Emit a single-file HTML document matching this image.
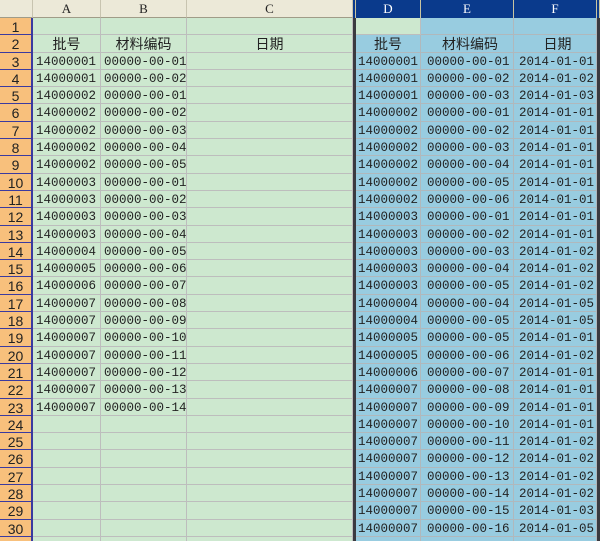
<!DOCTYPE html>
<html><head><meta charset="utf-8"><style>
html,body{margin:0;padding:0;background:#fff;width:600px;height:545px;overflow:hidden}
#s{position:absolute;left:0;top:0;width:600px;height:541px;overflow:hidden;display:grid;
grid-template-columns:33px 68px 86px 166px 3px 65px 93px 83px 3px;
grid-template-rows:18px repeat(31,17.3px);
font-family:"Liberation Mono","Noto Sans CJK SC",monospace;font-size:12.5px;color:#222}
#s div{box-sizing:border-box;white-space:nowrap;overflow:hidden;line-height:19px}
.h{background:#ece9d8;border-right:1px solid #c8c4b0;border-bottom:1px solid #a09c88;text-align:center;font-family:"Liberation Serif",serif;font-size:13px;line-height:17px!important;color:#222}
.hb{background:#0a3a8c;color:#fff;border-right:1px solid #c8c4a0;text-align:center;font-family:"Liberation Serif",serif;font-size:13px;line-height:17px!important}
.r{background:#f8c07c;border-right:2px solid #3a3aa0;border-bottom:1px solid #3a3aa0;text-align:center;font-size:14px;font-family:"Liberation Sans",sans-serif;line-height:18px!important}
.g{background:#cde8cf;border-right:1px solid #bdbdbd;border-bottom:1px solid #bdbdbd;padding-left:3px}
.b{background:#98cce0;border-right:1px solid #b0b8bc;border-bottom:1px solid #b0b8bc;padding-left:2px}
#s .b:nth-child(9n+7){padding-left:6px}
#s .b:nth-child(9n+8){padding-left:5px}
.d{background:#3a3a40}
#s .c{text-align:center;padding-left:0;font-size:14px;font-family:"Liberation Sans","Noto Sans CJK SC",sans-serif}
</style></head><body><div id="s">
<div class="h"></div><div class="h">A</div><div class="h">B</div><div class="h">C</div><div class="hb" style="background:#0a3a8c"></div><div class="hb">D</div><div class="hb">E</div><div class="hb">F</div><div class="hb"></div>
<div class="r">1</div><div class="g"></div><div class="g"></div><div class="g"></div><div class="d"></div><div class="g"></div><div class="b"></div><div class="b"></div><div class="d"></div>
<div class="r">2</div><div class="g c">批号</div><div class="g c">材料编码</div><div class="g c">日期</div><div class="d"></div><div class="b c">批号</div><div class="b c">材料编码</div><div class="b c">日期</div><div class="d"></div>
<div class="r">3</div><div class="g">14000001</div><div class="g">00000-00-01</div><div class="g"></div><div class="d"></div><div class="b">14000001</div><div class="b">00000-00-01</div><div class="b">2014-01-01</div><div class="d"></div>
<div class="r">4</div><div class="g">14000001</div><div class="g">00000-00-02</div><div class="g"></div><div class="d"></div><div class="b">14000001</div><div class="b">00000-00-02</div><div class="b">2014-01-02</div><div class="d"></div>
<div class="r">5</div><div class="g">14000002</div><div class="g">00000-00-01</div><div class="g"></div><div class="d"></div><div class="b">14000001</div><div class="b">00000-00-03</div><div class="b">2014-01-03</div><div class="d"></div>
<div class="r">6</div><div class="g">14000002</div><div class="g">00000-00-02</div><div class="g"></div><div class="d"></div><div class="b">14000002</div><div class="b">00000-00-01</div><div class="b">2014-01-01</div><div class="d"></div>
<div class="r">7</div><div class="g">14000002</div><div class="g">00000-00-03</div><div class="g"></div><div class="d"></div><div class="b">14000002</div><div class="b">00000-00-02</div><div class="b">2014-01-01</div><div class="d"></div>
<div class="r">8</div><div class="g">14000002</div><div class="g">00000-00-04</div><div class="g"></div><div class="d"></div><div class="b">14000002</div><div class="b">00000-00-03</div><div class="b">2014-01-01</div><div class="d"></div>
<div class="r">9</div><div class="g">14000002</div><div class="g">00000-00-05</div><div class="g"></div><div class="d"></div><div class="b">14000002</div><div class="b">00000-00-04</div><div class="b">2014-01-01</div><div class="d"></div>
<div class="r">10</div><div class="g">14000003</div><div class="g">00000-00-01</div><div class="g"></div><div class="d"></div><div class="b">14000002</div><div class="b">00000-00-05</div><div class="b">2014-01-01</div><div class="d"></div>
<div class="r">11</div><div class="g">14000003</div><div class="g">00000-00-02</div><div class="g"></div><div class="d"></div><div class="b">14000002</div><div class="b">00000-00-06</div><div class="b">2014-01-01</div><div class="d"></div>
<div class="r">12</div><div class="g">14000003</div><div class="g">00000-00-03</div><div class="g"></div><div class="d"></div><div class="b">14000003</div><div class="b">00000-00-01</div><div class="b">2014-01-01</div><div class="d"></div>
<div class="r">13</div><div class="g">14000003</div><div class="g">00000-00-04</div><div class="g"></div><div class="d"></div><div class="b">14000003</div><div class="b">00000-00-02</div><div class="b">2014-01-01</div><div class="d"></div>
<div class="r">14</div><div class="g">14000004</div><div class="g">00000-00-05</div><div class="g"></div><div class="d"></div><div class="b">14000003</div><div class="b">00000-00-03</div><div class="b">2014-01-02</div><div class="d"></div>
<div class="r">15</div><div class="g">14000005</div><div class="g">00000-00-06</div><div class="g"></div><div class="d"></div><div class="b">14000003</div><div class="b">00000-00-04</div><div class="b">2014-01-02</div><div class="d"></div>
<div class="r">16</div><div class="g">14000006</div><div class="g">00000-00-07</div><div class="g"></div><div class="d"></div><div class="b">14000003</div><div class="b">00000-00-05</div><div class="b">2014-01-02</div><div class="d"></div>
<div class="r">17</div><div class="g">14000007</div><div class="g">00000-00-08</div><div class="g"></div><div class="d"></div><div class="b">14000004</div><div class="b">00000-00-04</div><div class="b">2014-01-05</div><div class="d"></div>
<div class="r">18</div><div class="g">14000007</div><div class="g">00000-00-09</div><div class="g"></div><div class="d"></div><div class="b">14000004</div><div class="b">00000-00-05</div><div class="b">2014-01-05</div><div class="d"></div>
<div class="r">19</div><div class="g">14000007</div><div class="g">00000-00-10</div><div class="g"></div><div class="d"></div><div class="b">14000005</div><div class="b">00000-00-05</div><div class="b">2014-01-01</div><div class="d"></div>
<div class="r">20</div><div class="g">14000007</div><div class="g">00000-00-11</div><div class="g"></div><div class="d"></div><div class="b">14000005</div><div class="b">00000-00-06</div><div class="b">2014-01-02</div><div class="d"></div>
<div class="r">21</div><div class="g">14000007</div><div class="g">00000-00-12</div><div class="g"></div><div class="d"></div><div class="b">14000006</div><div class="b">00000-00-07</div><div class="b">2014-01-01</div><div class="d"></div>
<div class="r">22</div><div class="g">14000007</div><div class="g">00000-00-13</div><div class="g"></div><div class="d"></div><div class="b">14000007</div><div class="b">00000-00-08</div><div class="b">2014-01-01</div><div class="d"></div>
<div class="r">23</div><div class="g">14000007</div><div class="g">00000-00-14</div><div class="g"></div><div class="d"></div><div class="b">14000007</div><div class="b">00000-00-09</div><div class="b">2014-01-01</div><div class="d"></div>
<div class="r">24</div><div class="g"></div><div class="g"></div><div class="g"></div><div class="d"></div><div class="b">14000007</div><div class="b">00000-00-10</div><div class="b">2014-01-01</div><div class="d"></div>
<div class="r">25</div><div class="g"></div><div class="g"></div><div class="g"></div><div class="d"></div><div class="b">14000007</div><div class="b">00000-00-11</div><div class="b">2014-01-02</div><div class="d"></div>
<div class="r">26</div><div class="g"></div><div class="g"></div><div class="g"></div><div class="d"></div><div class="b">14000007</div><div class="b">00000-00-12</div><div class="b">2014-01-02</div><div class="d"></div>
<div class="r">27</div><div class="g"></div><div class="g"></div><div class="g"></div><div class="d"></div><div class="b">14000007</div><div class="b">00000-00-13</div><div class="b">2014-01-02</div><div class="d"></div>
<div class="r">28</div><div class="g"></div><div class="g"></div><div class="g"></div><div class="d"></div><div class="b">14000007</div><div class="b">00000-00-14</div><div class="b">2014-01-02</div><div class="d"></div>
<div class="r">29</div><div class="g"></div><div class="g"></div><div class="g"></div><div class="d"></div><div class="b">14000007</div><div class="b">00000-00-15</div><div class="b">2014-01-03</div><div class="d"></div>
<div class="r">30</div><div class="g"></div><div class="g"></div><div class="g"></div><div class="d"></div><div class="b">14000007</div><div class="b">00000-00-16</div><div class="b">2014-01-05</div><div class="d"></div>
<div class="r">31</div><div class="g"></div><div class="g"></div><div class="g"></div><div class="d"></div><div class="b"></div><div class="b"></div><div class="b"></div><div class="d"></div>
</div></body></html>
